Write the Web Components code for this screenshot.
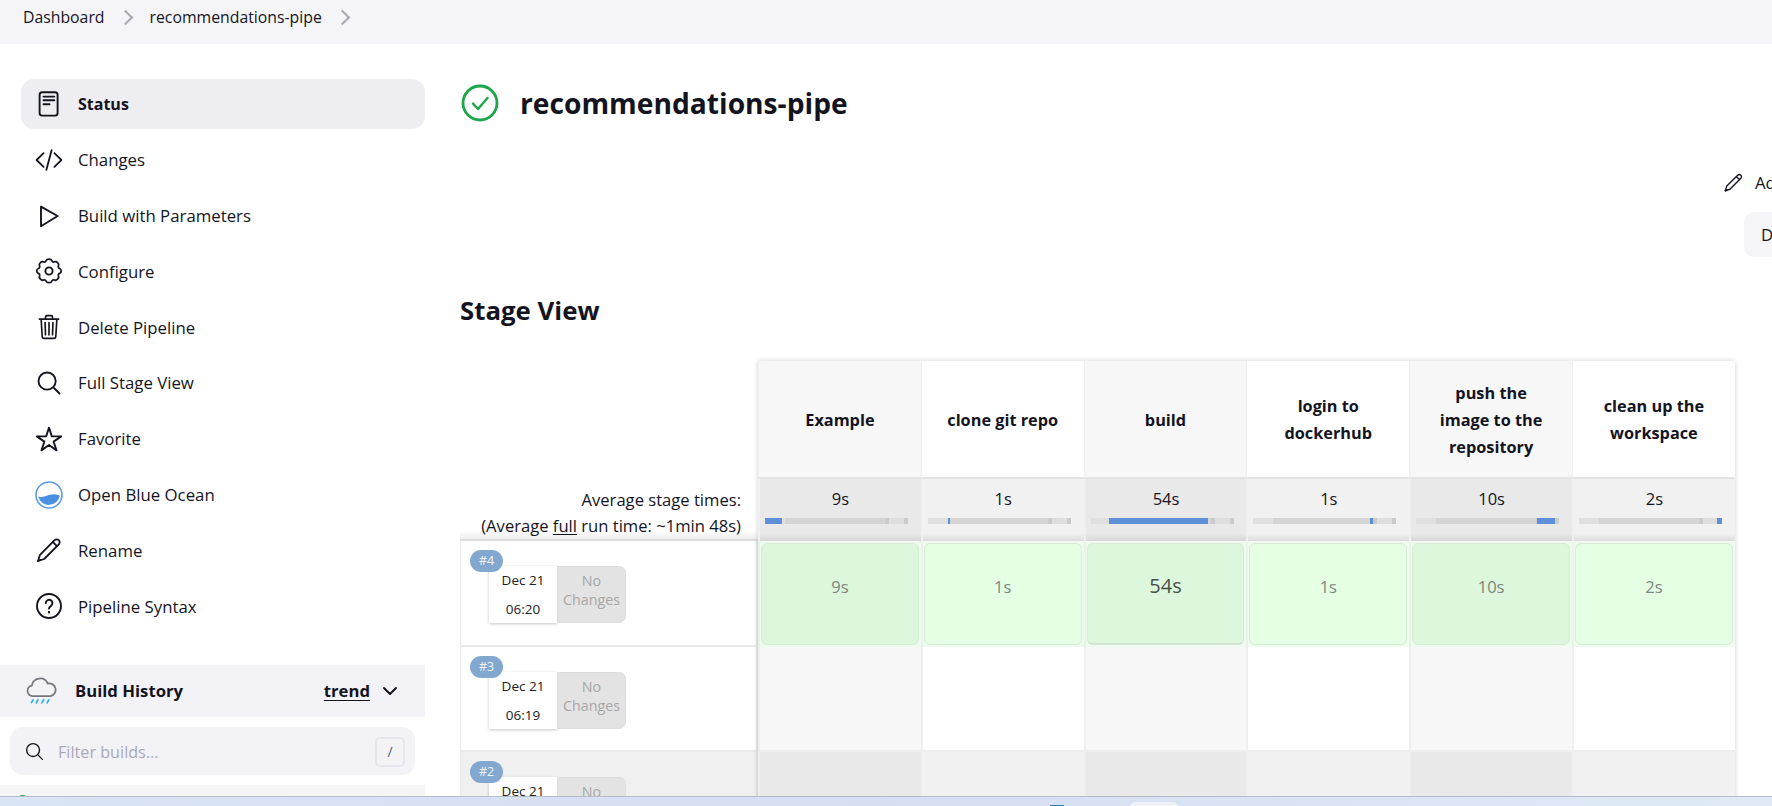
<!DOCTYPE html>
<html lang="en"><head><meta charset="utf-8"><title>recommendations-pipe</title>
<style>
html,body{margin:0;height:100%;overflow:hidden;background:#fff}
body{font-family:"Open Sans","Liberation Sans",sans-serif;color:#14141f}
</style></head><body>
<jk-page>
  <jk-breadcrumbs slot="top"><a>Dashboard</a><a>recommendations-pipe</a></jk-breadcrumbs>
  <jk-sidebar slot="side">
    <jk-side-item icon="status" active>Status</jk-side-item>
    <jk-side-item icon="code">Changes</jk-side-item>
    <jk-side-item icon="play">Build with Parameters</jk-side-item>
    <jk-side-item icon="gear">Configure</jk-side-item>
    <jk-side-item icon="trash">Delete Pipeline</jk-side-item>
    <jk-side-item icon="search">Full Stage View</jk-side-item>
    <jk-side-item icon="star">Favorite</jk-side-item>
    <jk-side-item icon="ocean">Open Blue Ocean</jk-side-item>
    <jk-side-item icon="pencil">Rename</jk-side-item>
    <jk-side-item icon="help">Pipeline Syntax</jk-side-item>
    <jk-build-history></jk-build-history>
  </jk-sidebar>
  <jk-job-main slot="main">
    <jk-stage-view></jk-stage-view>
  </jk-job-main>
  <jk-taskbar slot="bottom"></jk-taskbar>
</jk-page>
<script>
const ICONS={
status:`<svg viewBox="0 0 28 28" fill="none" stroke="currentColor" stroke-width="1.9" stroke-linecap="round" stroke-linejoin="round"><rect x="4.6" y="2.2" width="18" height="23.4" rx="2.6"/><path d="M8.5 6.6h10.8M8.5 10.2h10.8M8.5 14.2h6"/></svg>`,
code:`<svg viewBox="0 0 28 28" fill="none" stroke="currentColor" stroke-width="1.8" stroke-linecap="round" stroke-linejoin="round"><path d="M8.6 7.2L1.6 14l7 6.8M19.4 7.2l7 6.8-7 6.8M16.6 4.2l-5.2 19.6"/></svg>`,
play:`<svg viewBox="0 0 28 28" fill="none" stroke="currentColor" stroke-width="1.9" stroke-linecap="round" stroke-linejoin="round"><path d="M6 4.6v19.6L22.6 14z"/></svg>`,
gear:`<svg viewBox="0 0 28 28" fill="none" stroke="currentColor" stroke-width="1.9" stroke-linecap="round" stroke-linejoin="round"><circle cx="14" cy="14" r="3.6"/><path d="M11 3.4c.3-1 1.2-1.6 3-1.6s2.700.6 3 1.600c.4 1.300 1.800 1.900 3 1.300.900-.500 2-.300 3.200 1 1.300 1.200 1.500 2.300 1 3.200-.6 1.200 0 2.600 1.300 3 1 .3 1.600 1.200 1.600 2.600s-.6 2.300-1.600 2.600c-1.300.4-1.900 1.800-1.300 3 .5.900.3 2-1 3.200-1.200 1.300-2.300 1.500-3.200 1-1.200-.6-2.600 0-3 1.300-.3 1-1.200 1.600-3 1.600s-2.700-.6-3-1.600c-.4-1.300-1.800-1.900-3-1.300-.9.500-2 .3-3.200-1-1.300-1.200-1.500-2.300-1-3.200.6-1.200 0-2.600-1.300-3-1-.3-1.600-1.200-1.600-2.600s.6-2.300 1.600-2.600c1.300-.4 1.900-1.800 1.300-3-.5-.9-.3-2 1-3.200 1.200-1.300 2.300-1.500 3.200-1 1.200.6 2.600 0 3-1.300z" transform="translate(14 14) scale(.93) translate(-14 -14.6)"/></svg>`,
trash:`<svg viewBox="0 0 512 512" fill="none" stroke="currentColor" stroke-width="30" stroke-linecap="round" stroke-linejoin="round"><path d="M112 112l20 320c.95 18.49 14.4 32 32 32h184c17.67 0 30.87-13.51 32-32l20-320M80 112h352M192 112V72a24 24 0 0124-24h80a24 24 0 0124 24v40M256 176v224M184 176l8 224M328 176l-8 224"/></svg>`,
search:`<svg viewBox="0 0 512 512" fill="none" stroke="currentColor" stroke-width="34" stroke-linecap="round" stroke-linejoin="round"><path d="M221.09 64a157.09 157.09 0 10157.09 157.09A157.1 157.1 0 00221.09 64zM338.29 338.29L448 448"/></svg>`,
star:`<svg viewBox="0 0 512 512" fill="none" stroke="currentColor" stroke-width="34" stroke-linejoin="round"><path d="M480 208H308L256 48l-52 160H32l140 96-54 160 138-100 138 100-54-160z"/></svg>`,
ocean:`<svg viewBox="0 0 28 28"><circle cx="14" cy="14" r="13" fill="#fff" stroke="#5b9bea" stroke-width="1.600"/><path d="M3.200 15.400c3.200 1 5.800.6 8.400-.6 3.200-1.400 7.200-2.600 13.200-.4A11 11 0 0 1 3.200 15.400z" fill="#4a90e2"/></svg>`,
pencil:`<svg viewBox="0 0 28 28" fill="none" stroke="currentColor" stroke-width="1.800" stroke-linecap="round" stroke-linejoin="round"><path d="M3 25l2-6.200L19.600 4.200a2.900 2.900 0 0 1 4.200 4.200L9.200 23z"/><path d="M18 6.200l3.900 3.900M3 25l2.600-1"/></svg>`,
help:`<svg viewBox="0 0 28 28" fill="none" stroke="currentColor" stroke-width="1.900" stroke-linecap="round" stroke-linejoin="round"><circle cx="14" cy="14" r="12"/><path d="M10.800 11a3.300 3.300 0 1 1 5.200 2.800c-1.200.8-2 1.400-2 2.800" stroke-width="2"/><circle cx="14" cy="20.200" r=".6" fill="currentColor" stroke-width="1.200"/></svg>`
};
function def(name,css,html){
  customElements.define(name,class extends HTMLElement{
    constructor(){super();const r=this.attachShadow({mode:"open"});r.innerHTML=`<style>${css}</style>${typeof html==="function"?html(this):html}`;}
  });
}
def("jk-page",`:host{display:grid;grid-template-rows:44px 1fr 10px;grid-template-columns:425px 1fr;height:806px;width:1772px;overflow:hidden}
 .top{grid-column:1/3}.bottom{grid-column:1/3}.side,.main{overflow:hidden;min-width:0}`,
 `<div class="top"><slot name="top"></slot></div><div class="side"><slot name="side"></slot></div><div class="main"><slot name="main"></slot></div><div class="bottom"><slot name="bottom"></slot></div>`);
def("jk-breadcrumbs",`:host{display:flex;align-items:center;height:44px;background:#f5f5f8;padding:0 0 10px 23px;box-sizing:border-box;font-size:15.8px}
 ::slotted(a){display:flex;align-items:center;color:#14141f}
 ::slotted(a)::after{content:"";width:9px;height:9px;border-top:2px solid #a9a9b3;border-right:2px solid #a9a9b3;transform:rotate(45deg);margin:0 19px 0 15px}`,`<slot></slot>`);
def("jk-sidebar",`:host{display:block;padding-top:35px}`,`<slot></slot>`);
def("jk-side-item",`:host{display:flex;align-items:center;height:50px;margin:0 0 5.8px 21px;width:404px;border-radius:13px;box-sizing:border-box;padding-left:14px;font-size:16.8px;gap:15px}
 :host([active]){background:#ededf2;font-weight:700;font-size:16px}
 .i{width:28px;height:28px;flex:none;display:block}.i svg{display:block;width:28px;height:28px}`,
 el=>`<span class="i">${ICONS[el.getAttribute("icon")]}</span><slot></slot>`);
def("jk-build-history",`:host{display:block;margin-top:33.8px}
 .head{display:flex;align-items:center;height:52px;background:#f3f3f7;padding:0 26px 0 24px;font-weight:700;font-size:16.7px;box-sizing:border-box}
 .head svg.c{width:34px;height:34px;margin-right:17px;flex:none}
 .t{flex:1}.tr{text-decoration:underline;text-underline-offset:3px}
 .head svg.d{width:18px;height:18px;margin-left:11px}
 .f{display:flex;align-items:center;height:48px;margin:10px 10px;background:#f3f3f7;border-radius:13px;padding:2px 10px 0 14px;box-sizing:border-box;font-size:16.2px;color:#a9a9b7}
 .f svg{width:21px;height:21px;color:#14141f;margin-right:13px;flex:none}
 .f span{flex:1;padding-top:1px}
 kbd{border:2px solid #e5e5ee;border-radius:5px;display:flex;align-items:center;justify-content:center;font:14px "Open Sans",sans-serif;color:#5b5b6b;padding:2px;width:22px;height:22px}
 .l{height:30px;background:#f5f5f5;padding:10px 0 0 17px;box-sizing:border-box}
 .l i{display:block;width:11px;height:11px;background:#1ea64b;border-radius:50%}`,
 `<div class="head"><svg class="c" viewBox="0 0 30 30" fill="none" stroke-linecap="round" stroke-linejoin="round"><path d="M7.500 19.500a4.700 4.700 0 0 1-.6-9.300A7.400 7.400 0 0 1 21 8.400a5.600 5.600 0 0 1 2.500 11.100z" stroke="#787882" stroke-width="1.600"/><path d="M8 22.800l-1.400 2.400M12.400 22.800l-1.600 2.600M17.400 22.800l-1.600 2.600M22 22.800l-1.600 2.600" stroke="#35b2ee" stroke-width="1.600"/></svg>
 <span class="t">Build History</span><span class="tr">trend</span><svg class="d" viewBox="0 0 18 18" fill="none" stroke="currentColor" stroke-width="2" stroke-linecap="round" stroke-linejoin="round"><path d="M3 6l6 6 6-6"/></svg></div>
 <div class="f"><svg viewBox="0 0 512 512" fill="none" stroke="currentColor" stroke-width="34" stroke-linecap="round"><path d="M221.09 64a157.09 157.09 0 10157.09 157.09A157.1 157.1 0 00221.09 64zM338.29 338.29L448 448"/></svg><span>Filter builds...</span><kbd>/</kbd></div>
 <div class="l"><i></i></div>`);
def("jk-job-main",`:host{display:block;padding:35px 0 0 35px;width:1347px;box-sizing:border-box}
 .title{display:flex;align-items:center;height:48px;gap:21px;font-size:28.2px;font-weight:700;margin:0}
 .title svg{width:38px;height:38px;flex:none;margin-left:1px}
 .acts{margin-left:1263px;font-size:16.8px;white-space:nowrap}
 .ad{display:flex;align-items:center;height:24px;gap:11px;margin-top:43px}
 .ad svg{width:21px;height:21px;flex:none}
 .dis{margin:18px 0 0 21px;height:45px;width:200px;background:#f5f5f8;border-radius:10px;display:flex;align-items:center;padding-left:17px;box-sizing:border-box}
 h2{margin:0;font-size:25.8px;font-weight:700;height:34px;line-height:34px;margin-top:36px}
 .sv{margin-top:34px}`,
 `<h1 class="title"><svg viewBox="0 0 38 38" fill="none" stroke-linecap="round" stroke-linejoin="round"><circle cx="19" cy="19" r="17" stroke="#1ea64b" stroke-width="2.800"/><path d="M12 19.500l5 5.500 9.500-11" stroke="#1ea64b" stroke-width="2.400"/></svg><span>recommendations-pipe</span></h1>
 <div class="acts"><div class="ad">${ICONS.pencil}<span>Add description</span></div><div class="dis">Disable Project</div></div>
 <h2>Stage View</h2><div class="sv"><slot></slot></div>`);
const cols=[["Example","9s",0,17],["clone git repo","1s",20,22],["build","54s",18,117],["login to dockerhub","1s",117,120],["push the image to the repository","10s",121,139],["clean up the workspace","2s",138,143]];
const builds=[["#4","Dec 21","06:20"],["#3","Dec 21","06:19"],["#2","Dec 21","06:18"]];
def("jk-stage-view",`:host{display:grid;position:relative;grid-template-columns:298px repeat(6,162.8px);grid-template-rows:116px 64px 106px 105px 60px;width:1275px;font-size:16.5px;text-align:center}
 .blank{background:#fff}
 .hd{display:flex;align-items:center;justify-content:center;font-weight:700;line-height:27px;box-sizing:border-box;border-left:1px solid #efefef;font-size:16.3px;padding-top:2px}
 .hd span{max-width:124px}
 .o{background:#f7f7f7}.e{background:#fff}
 .avgl{text-align:right;padding:10px 17px 0 0;box-sizing:border-box;line-height:26px;border-bottom:2px solid #ddd;background:linear-gradient(#fff 86%,#eee);font-size:16.6px;white-space:nowrap}
 .avgl u{text-underline-offset:2px}
 .av{box-sizing:border-box;border-top:2px solid #e3e3e3;border-left:2px solid #efefef;padding-top:8px;line-height:24px}
 .av.o{background:linear-gradient(#e9e9e9 88%,#d6d6d6)}.av.e{background:linear-gradient(#f1f1f1 88%,#dcdcdc)}
 .bar{height:6px;margin:7px 0 0 5px;width:143px}
 .rl{border:1px solid #e9e9e9;border-width:0 2px 2px 1px;box-sizing:border-box;padding:9px 0 0 9px;background:#fff;text-align:left}
 .rl.g{background:#f0f0f0}
 .rw{display:block;position:relative;padding:16px 0 0 19px}
 .b{position:absolute;left:0;top:0;width:33px;height:22px;border-radius:11px;background:#83a8d0;color:#eef3f8;font-size:12.5px;line-height:22px;text-align:center}
 .bx{display:flex;height:57px}
 .dt{width:68px;background:#fff;box-shadow:0 1px 3px rgba(0,0,0,.22);display:grid;grid-template-rows:1fr 1fr;text-align:center;font-size:13.5px;line-height:28px;color:#222}
 .nc{width:69px;background:#e3e3e3;border:1px solid #ddd;box-sizing:border-box;border-radius:0 7px 7px 0;color:#a7a7a7;font-size:14.3px;line-height:19px;padding-top:4px;text-align:center}
 .c{box-sizing:border-box;border-left:2px solid #efefef;border-bottom:2px solid #eee}
 .c.g.o{background:#e9e9e9}.c.g.e{background:#f1f1f1}
 .s{padding:2px 2px 2px 1px;background:#eefbee;border-bottom:0;border-left:2px solid #eaf3ea}
 .s div{height:100%;box-sizing:border-box;border:1px solid #d6ecd6;border-radius:6px;display:flex;align-items:center;justify-content:center;color:#7d877d;font-size:16.5px;padding-bottom:16px}
 .s.o div{background:#dcf7dc}.s.e div{background:#e4ffe4}
 .s.big div{font-size:20px;color:#48504a;border-bottom:2px solid #d3e3d3}
 .frame{position:absolute;left:298px;top:0;right:0;bottom:0;box-shadow:0 0 5px rgba(0,0,0,.18);pointer-events:none}`,
 ()=>{
  let h=`<div class="blank"></div>`;
  cols.forEach((c,i)=>h+=`<div class="hd ${i%2?"e":"o"}"><span>${c[0]}</span></div>`);
  h+=`<div class="avgl">Average stage times:<br>(Average <u>full</u> run time: ~1min 48s)</div>`;
  cols.forEach((c,i)=>{
    const [a,b]=[c[2],c[3]];
    const ticks=`linear-gradient(90deg,#dfdfdf 0 20px,#d5d5d5 20px 120px,#cbcbcb 120px 124px,#dedede 124px 139px,#cbcbcb 139px)`;
    const blue=`linear-gradient(90deg,transparent ${a}px,#5f8fd6 ${a}px ${b}px,transparent ${b}px)`;
    h+=`<div class="av ${i%2?"e":"o"}">${c[1]}<div class="bar" style="background:${blue},${ticks}"></div></div>`;
  });
  builds.forEach((r,ri)=>{
    h+=`<div class="rl ${ri==2?"g":""}"><div class="rw"><span class="b">${r[0]}</span><div class="bx"><div class="dt"><span>${r[1]}</span><span>${r[2]}</span></div><div class="nc">No<br>Changes</div></div></div></div>`;
    cols.forEach((c,i)=>{
      const p=i%2?"e":"o";
      if(ri==0)h+=`<div class="c s ${p} ${i==2?"big":""}"><div>${c[1]}</div></div>`;
      else h+=`<div class="c ${p} ${ri==2?"g":""}"></div>`;
    });
  });
  return h+`<div class="frame"></div>`;
 });
def("jk-taskbar",`:host{display:flex;height:10px;box-sizing:border-box;border-top:1px solid #b6bcc8;background:linear-gradient(90deg,#d9e4f5,#d6def2 50%,#dfeaf6);overflow:hidden}
 .a{width:14px;height:4px;margin:8px 0 0 1050px;background:#1f7fc8;flex:none}
 .p{width:48px;height:10px;margin:5px 0 0 66px;background:#eef1f7;border-radius:5px 5px 0 0;flex:none}`,`<div class="a"></div><div class="p"></div>`);
</script>
</body></html>
